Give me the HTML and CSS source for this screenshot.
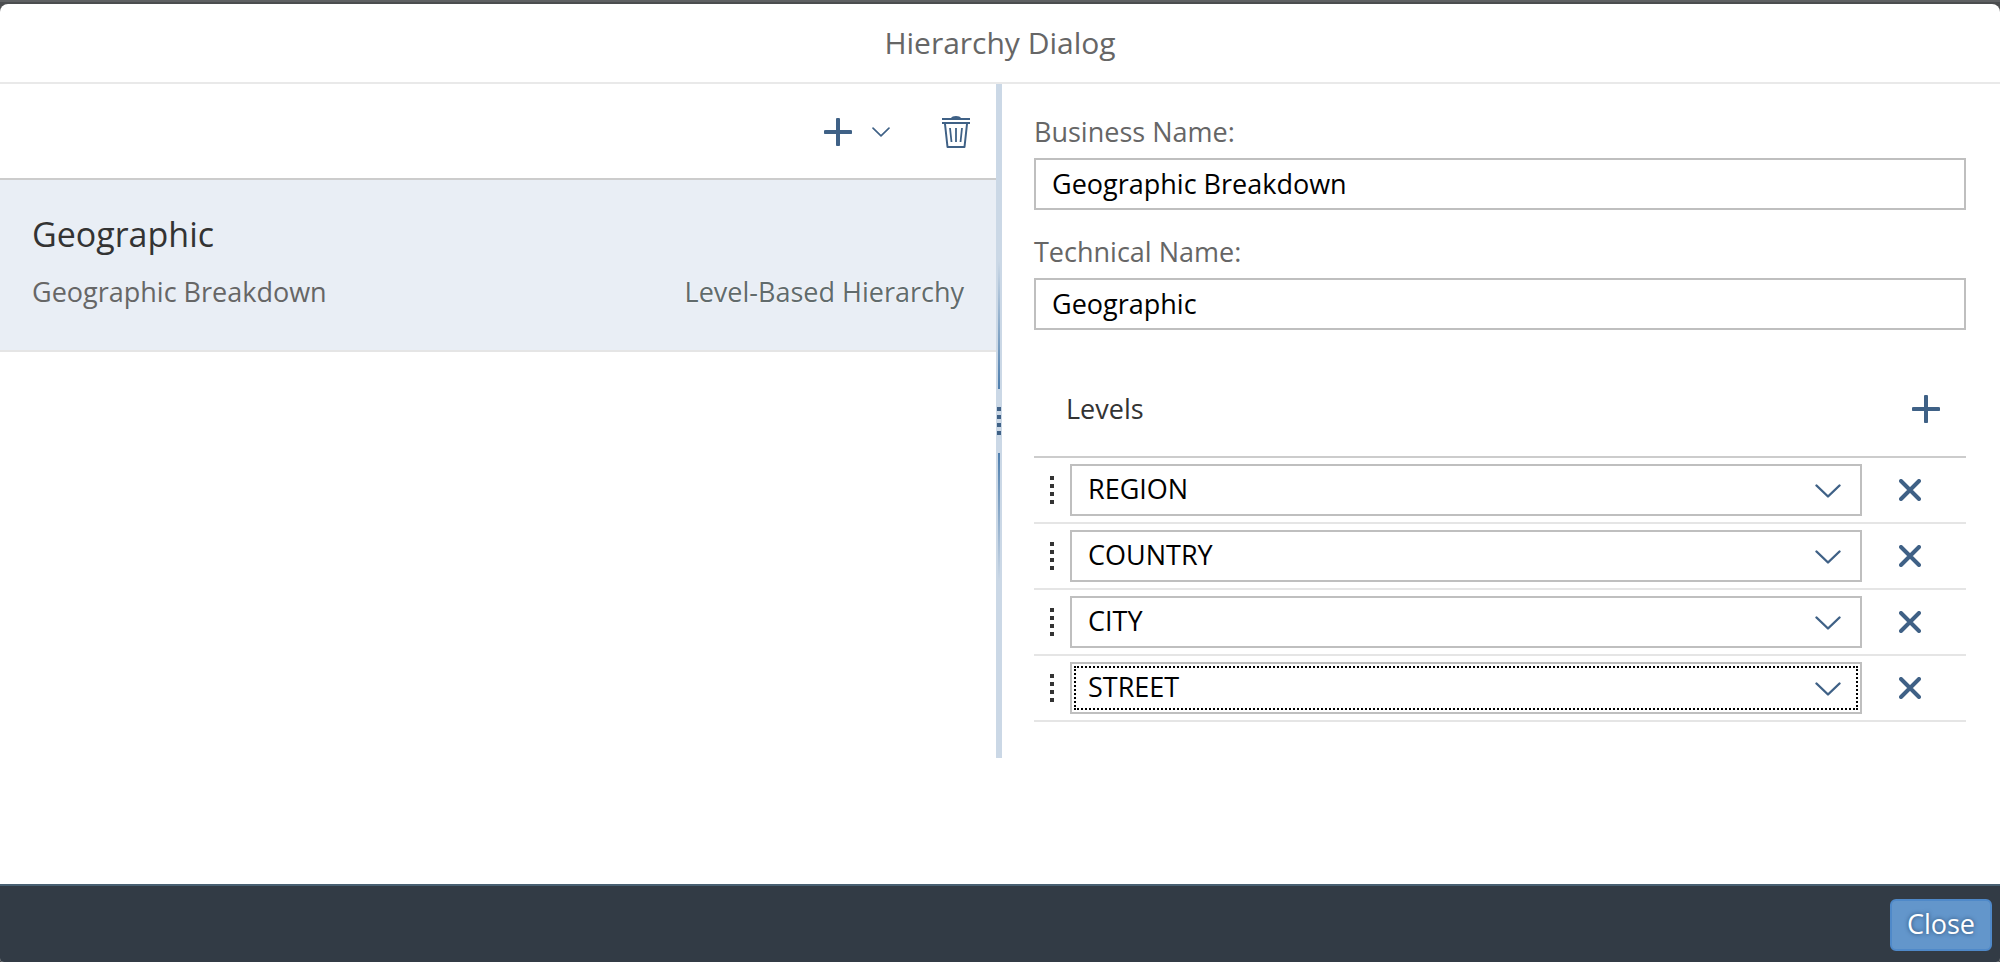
FILE: index.html
```html
<!DOCTYPE html>
<html lang="en">
<head>
<meta charset="utf-8">
<title>Hierarchy Dialog</title>
<link rel="stylesheet" href="styles.css">
</head>
<body>
<svg class="sprite" aria-hidden="true">
  <symbol id="plus" viewBox="0 0 28 28"><path d="M14 1.500v25M1.500 14h25" fill="none" stroke="currentColor" stroke-width="4" stroke-linecap="round"/></symbol>
  <symbol id="chevron" viewBox="0 0 26 14"><path d="M1.500 1.500 13 12.500 24.500 1.500" fill="none" stroke="currentColor" stroke-width="2.400" stroke-linecap="round" stroke-linejoin="round"/></symbol>
  <symbol id="cross" viewBox="0 0 22 22"><path d="M2 2l18 18M20 2L2 20" fill="none" stroke="currentColor" stroke-width="4" stroke-linecap="round"/></symbol>
  <symbol id="trash" viewBox="0 0 28 32"><path d="M0 2h9q1-2 5-2t5 2h9v2H0zM0 6h28v2H0z" fill="currentColor"/><path d="M3 8l2.500 23h17L25 8" fill="none" stroke="currentColor" stroke-width="2" stroke-linejoin="round"/><path d="M8 12l1.500 14M14 12v14M20 12l-1.500 14" fill="none" stroke="currentColor" stroke-width="1.800"/></symbol>
</svg>
<div class="dialog" role="dialog" aria-labelledby="dialog-title">
  <header class="dialog-header"><h1 class="dialog-title" id="dialog-title">Hierarchy Dialog</h1></header>
  <main class="dialog-body">
    <div class="split">
      <section class="master">
        <div class="toolbar">
          <button class="icon-button add-menu" type="button" aria-label="Add hierarchy">
            <svg class="icon-plus"><use href="#plus"/></svg>
            <svg class="icon-chevron-small"><use href="#chevron"/></svg>
          </button>
          <button class="icon-button" type="button" aria-label="Delete hierarchy"><svg class="icon-trash"><use href="#trash"/></svg></button>
        </div>
        <ul class="list">
          <li class="list-item">
            <h2 class="item-title">Geographic</h2>
            <div class="item-details"><span>Geographic Breakdown</span><span class="item-type">Level-Based Hierarchy</span></div>
          </li>
        </ul>
      </section>
      <div class="splitter" role="separator" aria-orientation="vertical">
        <span class="splitter-line splitter-line-top"></span>
        <span class="dots splitter-dots"></span>
        <span class="splitter-line splitter-line-bottom"></span>
      </div>
      <section class="detail">
        <div class="field">
          <label class="label" for="business-name">Business Name:</label>
          <input class="input" id="business-name" type="text" value="Geographic Breakdown">
        </div>
        <div class="field">
          <label class="label" for="technical-name">Technical Name:</label>
          <input class="input" id="technical-name" type="text" value="Geographic">
        </div>
        <div class="levels-header">
          <h2 class="levels-title">Levels</h2>
          <button class="icon-button" type="button" aria-label="Add level"><svg class="icon-plus"><use href="#plus"/></svg></button>
        </div>
        <ul class="list">
          <li class="level">
            <span class="dots"></span>
            <div class="combo"><select class="input combo-select" aria-label="Level 1"><option>REGION</option></select><svg class="icon-chevron"><use href="#chevron"/></svg></div>
            <button class="icon-button remove" type="button" aria-label="Remove REGION"><svg class="icon-cross"><use href="#cross"/></svg></button>
          </li>
          <li class="level">
            <span class="dots"></span>
            <div class="combo"><select class="input combo-select" aria-label="Level 2"><option>COUNTRY</option></select><svg class="icon-chevron"><use href="#chevron"/></svg></div>
            <button class="icon-button remove" type="button" aria-label="Remove COUNTRY"><svg class="icon-cross"><use href="#cross"/></svg></button>
          </li>
          <li class="level">
            <span class="dots"></span>
            <div class="combo"><select class="input combo-select" aria-label="Level 3"><option>CITY</option></select><svg class="icon-chevron"><use href="#chevron"/></svg></div>
            <button class="icon-button remove" type="button" aria-label="Remove CITY"><svg class="icon-cross"><use href="#cross"/></svg></button>
          </li>
          <li class="level">
            <span class="dots"></span>
            <div class="combo"><select class="input combo-select is-focused" aria-label="Level 4"><option>STREET</option></select><svg class="icon-chevron"><use href="#chevron"/></svg></div>
            <button class="icon-button remove" type="button" aria-label="Remove STREET"><svg class="icon-cross"><use href="#cross"/></svg></button>
          </li>
        </ul>
      </section>
    </div>
  </main>
  <footer class="dialog-footer"><button class="close-button" type="button">Close</button></footer>
</div>
</body>
</html>
```
FILE: styles.css
```css
*, *::before, *::after { box-sizing: border-box; }

body {
  margin: 0;
  min-height: 100vh;
  display: flex;
  flex-direction: column;
  padding-top: 4px;
  background: linear-gradient(#5e6062 0, #5e6062 2px, #4b4d4f 2px);
  color: #333;
  font-family: "Open Sans", "Noto Sans", sans-serif;
  font-size: 27px;
  line-height: 32px;
}

button, input, select { font: inherit; }
h1, h2, ul { margin: 0; padding: 0; font-weight: 400; }
svg { display: block; flex: none; }
.sprite { position: absolute; width: 0; height: 0; }

.dialog {
  flex: 1;
  display: flex;
  flex-direction: column;
  overflow: hidden;
  border-radius: 8px 8px 4px 4px;
  background: #fff;
}

.dialog-header {
  height: 80px;
  display: flex;
  align-items: center;
  justify-content: center;
  border-bottom: 2px solid #e9e9e9;
}
.dialog-title { font-size: 30px; color: #666; }
.dialog-body { flex: 1; }

.split { display: grid; grid-template-columns: minmax(0, 996fr) 6px minmax(0, 998fr); }

.toolbar {
  height: 96px;
  display: flex;
  align-items: center;
  justify-content: flex-end;
  gap: 52px;
  padding: 2px 26px 0 0;
  border-bottom: 2px solid #ccc;
}
.icon-button {
  display: flex;
  align-items: center;
  justify-content: center;
  padding: 0;
  border: 0;
  background: none;
  color: #3f6186;
}
.add-menu { gap: 20px; }
.icon-plus { width: 28px; height: 28px; }
.icon-chevron-small { width: 18px; height: 10px; }
.icon-trash { width: 28px; height: 32px; }
.icon-cross { width: 22px; height: 22px; }

.list { list-style: none; }
.list-item {
  padding: 30px 32px 40px;
  border-bottom: 2px solid #e5e5e5;
  background: #e9eef5;
}
.item-title { margin-bottom: 16px; font-size: 34px; line-height: 48px; }
.item-details {
  display: flex;
  justify-content: space-between;
  line-height: 36px;
  color: #666;
}
.item-type { color: #616b6c; text-shadow: 0 0 2px #fff; }

.splitter {
  display: flex;
  flex-direction: column;
  align-items: center;
  justify-content: center;
  background: #cbd8e6;
}
.splitter-line { width: 2px; height: 128px; }
.splitter-line-top { background: linear-gradient(#4f7fae00, #4f7fae); }
.splitter-line-bottom { background: linear-gradient(#4f7fae, #4f7fae00); }
.dots {
  flex: none;
  width: 4px;
  height: 28px;
  background: repeating-linear-gradient(#333 0, #333 4px, transparent 4px, transparent 8px);
}
.splitter-dots {
  margin: 18px 0;
  background: repeating-linear-gradient(#3f6186 0, #3f6186 4px, transparent 4px, transparent 8px);
}

.detail { padding: 32px 34px 36px 32px; }
.field { margin-bottom: 26px; }
.label { display: block; margin-bottom: 10px; color: #666; }
.input {
  display: block;
  width: 100%;
  height: 52px;
  padding: 0 16px 2px;
  border: 2px solid #bfbfbf;
  border-radius: 0;
  outline: 0;
  background: #fff;
  color: #000;
}

.levels-header {
  height: 96px;
  display: flex;
  align-items: center;
  justify-content: space-between;
  margin-top: 32px;
  padding: 0 26px 0 32px;
  border-bottom: 2px solid #ccc;
}
.levels-title { font-size: 27px; }
.level {
  display: flex;
  align-items: center;
  gap: 16px;
  padding: 6px 8px 6px 16px;
  border-bottom: 2px solid #e5e5e5;
}
.combo { position: relative; flex: 1; }
.combo-select { appearance: none; }
.is-focused { outline: 2px dotted #000; outline-offset: -6px; }
.icon-chevron {
  position: absolute;
  top: 20px;
  right: 21px;
  width: 26px;
  height: 14px;
  color: #3f6186;
  pointer-events: none;
}
.remove { width: 96px; height: 52px; margin-left: -16px; }

.dialog-footer {
  height: 78px;
  display: flex;
  align-items: center;
  justify-content: flex-end;
  padding: 2px 8px 0 0;
  border-top: 2px solid #486072;
  background: #323b45;
}
.close-button {
  height: 52px;
  padding: 0 15px 2px;
  border: 2px solid #4f89c9;
  border-radius: 6px;
  background: #6396cb;
  color: #fff;
  text-shadow: 0 0 4px #2a4a6e;
}
```
